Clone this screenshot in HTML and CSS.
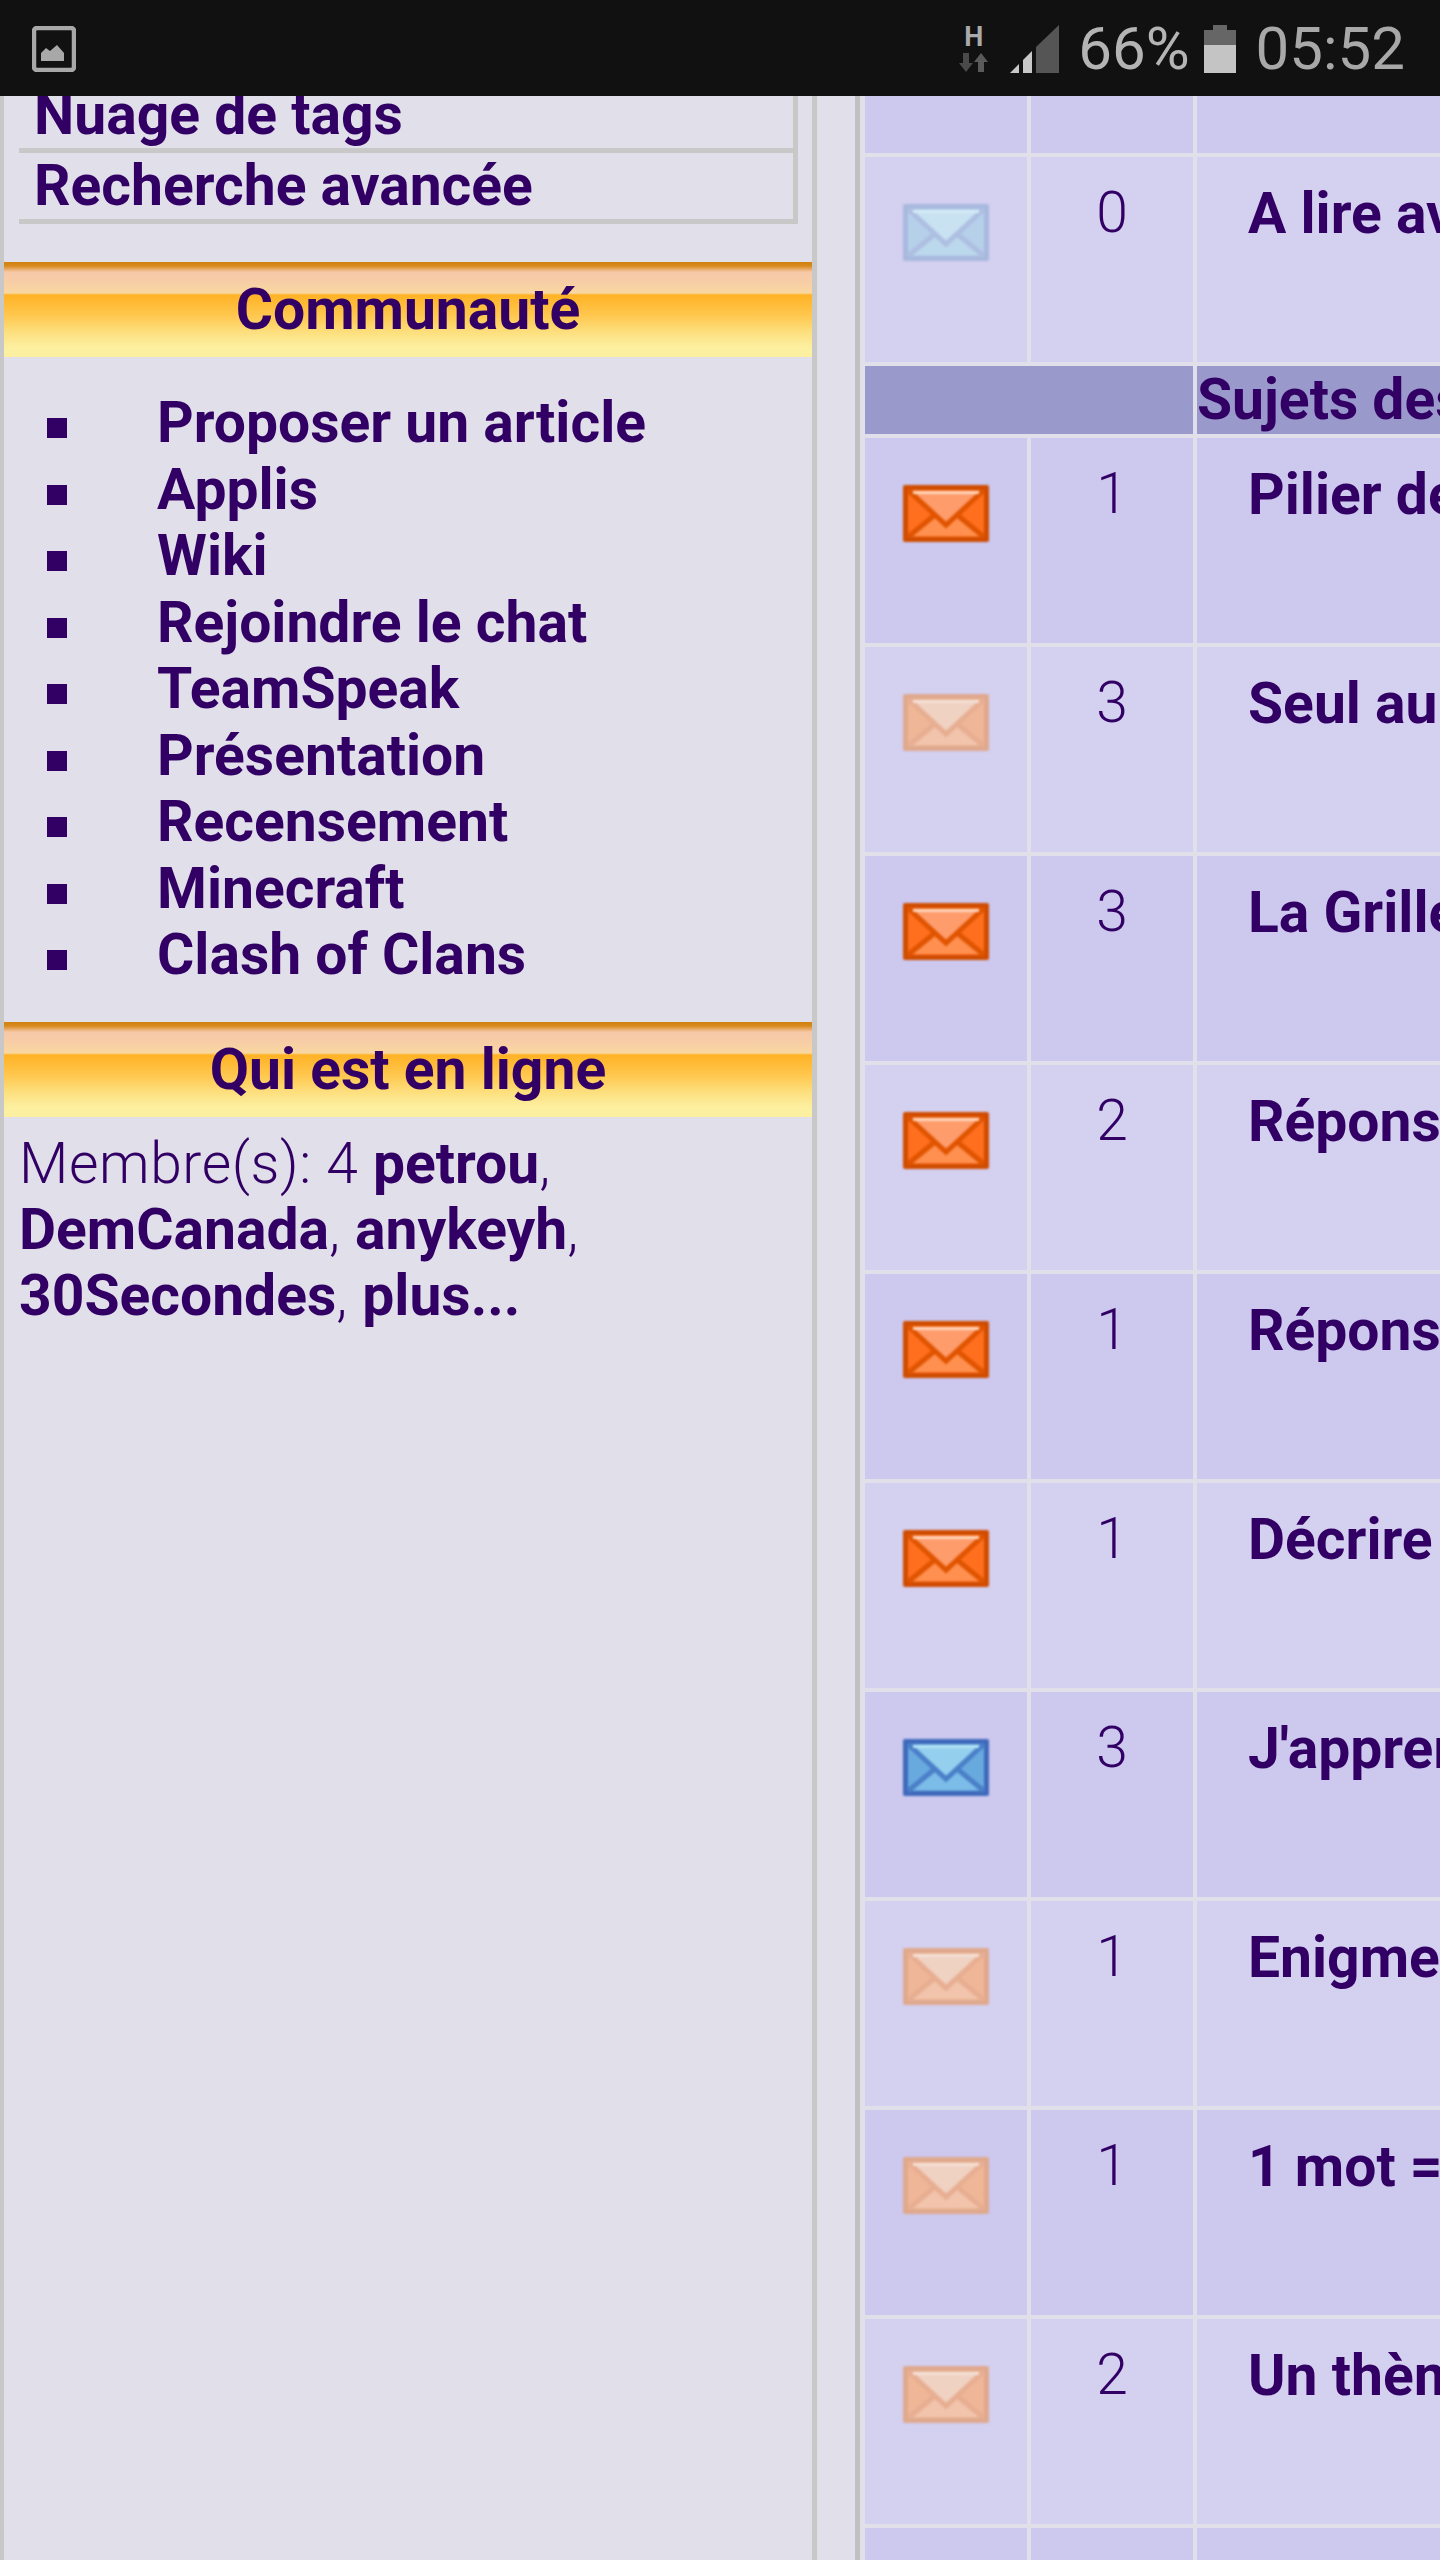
FILE: index.html
```html
<!DOCTYPE html>
<html lang="fr">
  <head>
    <meta charset="UTF-8" />
    <meta name="viewport" content="width=device-width, initial-scale=1.0" />
    <title>Forum</title>
    <link rel="stylesheet" href="styles.css">
  </head>
  <body>
    <svg class="icon-defs" width="0" height="0">
      <defs>
        <symbol id="envelope" viewBox="0 0 86 57">
          <rect width="86" height="57" rx="2" fill="var(--edge)" />
          <rect x="5" y="5" width="76" height="47" fill="var(--body)" />
          <path d="M8 51 L33 31 L43 40 L53 31 L78 51 Z" fill="var(--low)" />
          <path d="M9 8 H77 L43 37 Z" fill="var(--flap)" />
          <path d="M5 5 L43 40 L81 5 M5 52 L33 29 M81 52 L53 29" fill="none" stroke="var(--line)" stroke-width="5" />
          <rect x="10" y="6" width="66" height="3" fill="var(--shine)" />
        </symbol>
      </defs>
    </svg>

    <header class="status-bar">
      <svg class="gallery-icon" width="44" height="46" viewBox="0 0 44 46">
        <rect x="2" y="2" width="40" height="42" rx="3" fill="none" stroke="#a8a8a8" stroke-width="4.5" />
        <path d="M9 35 V27 L14 22 L18 25 L25 19 L32 27 V35 Z" fill="#a8a8a8" />
      </svg>
      <div class="status-right">
        <div class="network">
          <span class="network-type">H</span>
          <svg width="29" height="19" viewBox="0 0 29 19">
            <path d="M4 0 H10 V10 H14 L7 19 L0 10 H4 Z" fill="#4a4a4a" />
            <path d="M19 19 V9 H15 L22 0 L29 9 H25 V19 Z" fill="#5a5a5a" />
          </svg>
        </div>
        <svg class="signal" width="49" height="48" viewBox="0 0 49 48">
          <path d="M0 48 L9 39 V48 Z" fill="#c8c8c8" />
          <path d="M13 35 L22 26 V48 H13 Z" fill="#c8c8c8" />
          <path d="M26 22 L49 0 V48 H26 Z" fill="#555" />
        </svg>
        <span class="battery-level">66%</span>
        <svg class="battery" width="32" height="48" viewBox="0 0 32 48">
          <path d="M0 5 H9 V0 H23 V5 H32 V20 H0 Z" fill="#666" />
          <rect y="20" width="32" height="28" fill="#c4c4c4" />
        </svg>
        <span class="clock">05:52</span>
      </div>
    </header>

    <div class="page">
      <aside class="side">
        <ul class="menu">
          <li>Nuage de tags</li>
          <li>Recherche avancée</li>
        </ul>

        <h2 class="banner">Communauté</h2>
        <ul class="links">
          <li>Proposer un article</li>
          <li>Applis</li>
          <li>Wiki</li>
          <li>Rejoindre le chat</li>
          <li>TeamSpeak</li>
          <li>Présentation</li>
          <li>Recensement</li>
          <li>Minecraft</li>
          <li>Clash of Clans</li>
        </ul>

        <h2 class="banner">Qui est en ligne</h2>
        <p class="online">
          Membre(s): 4 <b>petrou</b>, <b>DemCanada</b>, <b>anykeyh</b>,
          <b>30Secondes</b>, <b>plus...</b>
        </p>
      </aside>

      <main class="main">
        <table class="topics">
          <colgroup>
            <col class="col-icon" />
            <col class="col-count" />
            <col class="col-title" />
          </colgroup>
          <tr class="row-cut dark"><td></td><td></td><td></td></tr>
          <tr class="light">
            <td><svg class="env env-blue-pale"><use href="#envelope" /></svg></td>
            <td class="count">0</td>
            <td class="title">A lire avant</td>
          </tr>
          <tr class="section">
            <td colspan="2"></td>
            <td>Sujets des</td>
          </tr>
          <tr class="dark">
            <td><svg class="env env-orange"><use href="#envelope" /></svg></td>
            <td class="count">1</td>
            <td class="title">Pilier de</td>
          </tr>
          <tr class="light">
            <td><svg class="env env-orange-pale"><use href="#envelope" /></svg></td>
            <td class="count">3</td>
            <td class="title">Seul au</td>
          </tr>
          <tr class="dark">
            <td><svg class="env env-orange"><use href="#envelope" /></svg></td>
            <td class="count">3</td>
            <td class="title">La Grille</td>
          </tr>
          <tr class="light">
            <td><svg class="env env-orange"><use href="#envelope" /></svg></td>
            <td class="count">2</td>
            <td class="title">Réponse</td>
          </tr>
          <tr class="dark">
            <td><svg class="env env-orange"><use href="#envelope" /></svg></td>
            <td class="count">1</td>
            <td class="title">Réponse</td>
          </tr>
          <tr class="light">
            <td><svg class="env env-orange"><use href="#envelope" /></svg></td>
            <td class="count">1</td>
            <td class="title">Décrire</td>
          </tr>
          <tr class="dark">
            <td><svg class="env env-blue"><use href="#envelope" /></svg></td>
            <td class="count">3</td>
            <td class="title">J'apprends</td>
          </tr>
          <tr class="light">
            <td><svg class="env env-orange-pale"><use href="#envelope" /></svg></td>
            <td class="count">1</td>
            <td class="title">Enigme</td>
          </tr>
          <tr class="dark">
            <td><svg class="env env-orange-pale"><use href="#envelope" /></svg></td>
            <td class="count">1</td>
            <td class="title">1 mot =</td>
          </tr>
          <tr class="light">
            <td><svg class="env env-orange-pale"><use href="#envelope" /></svg></td>
            <td class="count">2</td>
            <td class="title">Un thème</td>
          </tr>
          <tr class="dark"><td></td><td></td><td></td></tr>
        </table>
      </main>
    </div>
  </body>
</html>
```

FILE: styles.css
```css
html,
body {
  margin: 0;
  height: 2560px;
  overflow: hidden;
}

body {
  font-family: Roboto, "Liberation Sans", sans-serif;
  font-size: 57px;
  line-height: 66px;
  color: #320064;
  background-color: #e0dfea;
}

.icon-defs {
  display: block;
}

/* status bar */
.status-bar {
  height: 94px;
  padding: 2px 35px 0 32px;
  display: flex;
  justify-content: space-between;
  align-items: center;
  background-color: #111;
  color: #b4b4b4;
}

.status-right {
  display: flex;
  align-items: center;
}

.network {
  display: flex;
  flex-direction: column;
  align-items: center;
  margin-right: 22px;
}

.network-type {
  font-size: 27px;
  font-weight: 700;
  line-height: 20px;
  margin-bottom: 6px;
  color: #aaa;
}

.battery-level {
  font-size: 60px;
  line-height: 58px;
  margin-left: 19px;
  margin-right: 14px;
}

.clock {
  font-size: 60px;
  line-height: 58px;
  margin-left: 20px;
  color: #a8a8a8;
}

/* page */
.page {
  height: 2464px;
  display: flex;
  overflow: hidden;
}

.side {
  width: 808px;
  flex: none;
  border-left: 4px solid #c8c8c8;
  border-right: 5px solid #c8c8c8;
  overflow: hidden;
}

.side ul {
  list-style: none;
  padding: 0;
  margin: 0;
}

.side .menu {
  margin: -14px 14px 38px 15px;
  border-right: 5px solid #c8c8c8;
  font-weight: 700;
}

.menu li {
  height: 66px;
  padding-left: 15px;
  border-bottom: 5px solid #c8c8c8;
}

.banner {
  height: 95px;
  margin: 0;
  font-size: 57px;
  font-weight: 700;
  line-height: 95px;
  text-align: center;
  background: linear-gradient(
    to bottom,
    #d0800c 0,
    #d98a20 4px,
    #f6c8a8 10px,
    #f7cda6 20px,
    #fad8a0 31px,
    #ffb225 33px,
    #ffc850 54px,
    #fde080 71px,
    #fcefa0 85px
  );
}

.side .links {
  padding: 33px 0;
  font-weight: 700;
}

.links li {
  display: flex;
  height: 66.5px;
  padding-left: 43px;
}

.links li::before {
  content: "";
  flex: none;
  width: 20px;
  height: 20px;
  margin: 28px 90px 0 0;
  background-color: #320064;
}

.online {
  margin: 0;
  padding: 14px 15px;
  font-weight: 350;
  letter-spacing: 0.6px;
}

.online b {
  font-weight: 700;
  letter-spacing: 0;
}

.main {
  flex: 1;
  min-width: 0;
  margin-left: 38px;
  border-left: 5px solid #c0c0c0;
  overflow: hidden;
}

.topics {
  table-layout: fixed;
  width: 1000px;
  margin-top: -4px;
  border-spacing: 4px;
  margin-left: 1px;
}

.col-icon,
.col-count {
  width: 162px;
}

.topics td {
  box-sizing: border-box;
  height: 205px;
  padding: 0;
  vertical-align: top;
}

.dark td {
  background-color: #ccc8ee;
}

.light td {
  background-color: #d4d0f0;
}

.topics .row-cut td {
  height: 57px;
}

.topics .section td {
  height: 68px;
  vertical-align: middle;
  font-weight: 700;
  white-space: nowrap;
  background-color: #9a99cc;
}

.topics .count {
  padding-top: 23px;
  font-weight: 350;
  text-align: center;
}

.topics .title {
  padding: 24px 0 0 51px;
  font-weight: 700;
  white-space: nowrap;
}

/* envelope icons */
.env {
  display: block;
  width: 86px;
  height: 57px;
  margin: 47px auto 0;
  filter: blur(1px);
}

.env-orange {
  --edge: #cf4c00;
  --body: #ff6f1e;
  --low: #ff9050;
  --flap: #ff9c6c;
  --line: #e05400;
  --shine: #ffd6bc;
}

.env-orange-pale {
  --edge: #dfa98e;
  --body: #efb797;
  --low: #f1c4ab;
  --flap: #f0d2c2;
  --line: #e8ae92;
  --shine: #f4e0d6;
}

.env-blue {
  --edge: #3f69bb;
  --body: #68aade;
  --low: #7cbce8;
  --flap: #94d0ee;
  --line: #4a7fc8;
  --shine: #b4e4f6;
}

.env-blue-pale {
  --edge: #a8b9de;
  --body: #b6d0ea;
  --low: #bcd8ec;
  --flap: #c8e2f2;
  --line: #aebfe2;
  --shine: #d6ecf6;
}
```
